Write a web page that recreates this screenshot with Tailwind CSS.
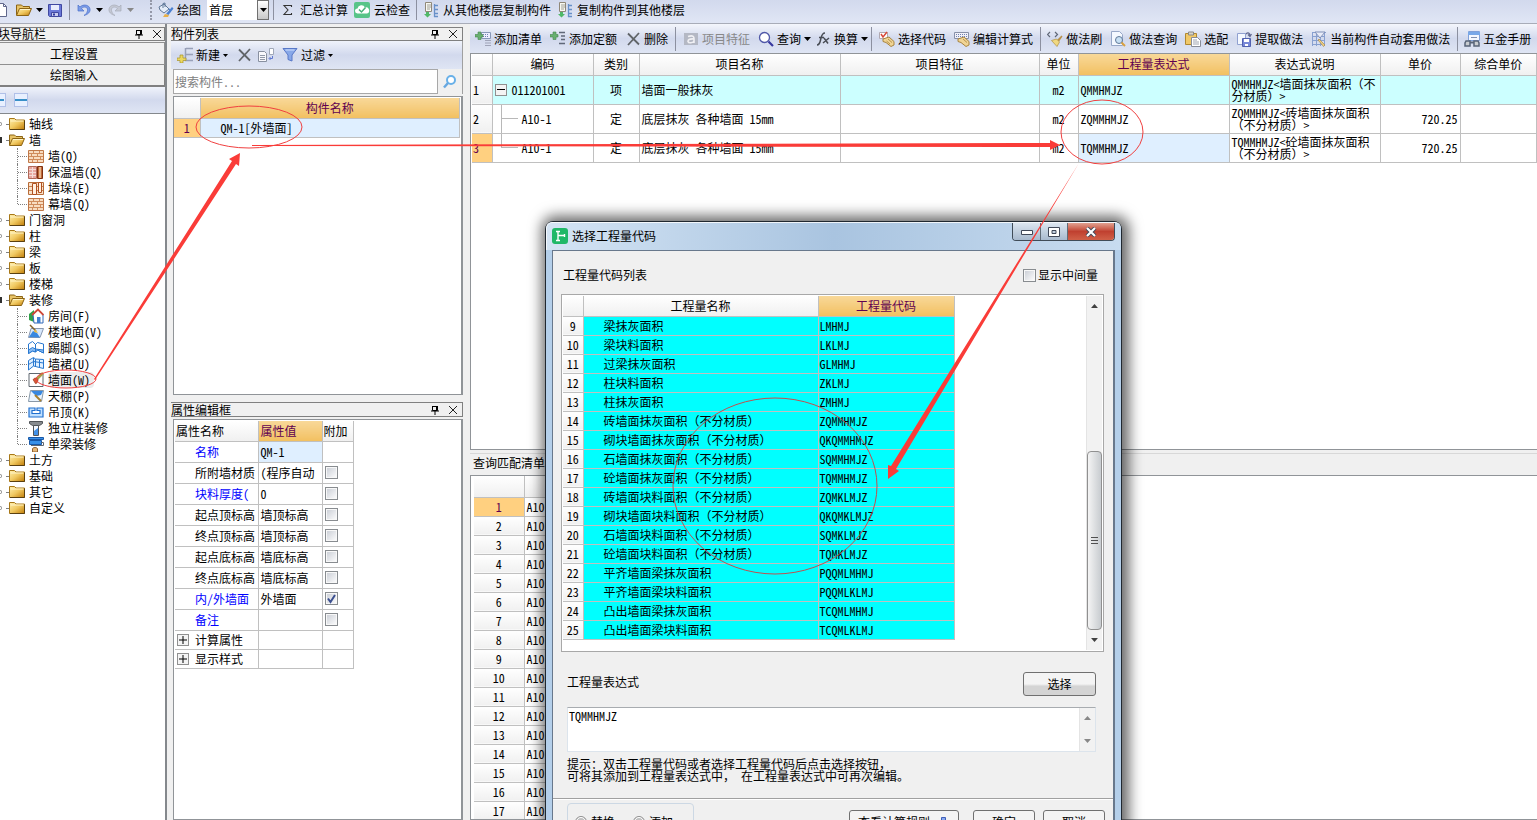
<!DOCTYPE html>
<html lang="zh-CN">
<head>
<meta charset="utf-8">
<title>选择工程量代码</title>
<script src="https://cdn.jsdelivr.net/npm/@tailwindcss/browser@4"></script>
</head>
<body class="relative h-screen overflow-hidden bg-[#f0f0f0] font-['Noto_Sans_Mono_CJK_SC','Noto_Sans_CJK_SC',monospace] text-xs leading-4 text-black">

<svg class="absolute h-0 w-0" aria-hidden="true">
  <defs>
    <linearGradient id="gold" x1="0" y1="0" x2="1" y2="1"><stop offset="0" stop-color="#fff0b0"/><stop offset=".5" stop-color="#f0c860"/><stop offset="1" stop-color="#c07c08"/></linearGradient>
  </defs>
  <symbol id="i-folder" viewBox="0 0 16 16"><path d="M.5 4V2.500h5L7 4h8.500v9.500H.5z" fill="url(#gold)" stroke="#a87818"/><path d="M15.500 4.500v9H1" fill="none" stroke="#5a4010"/><path d="M1.500 5h13" stroke="#fff4c8"/></symbol>
  <symbol id="i-open" viewBox="0 0 16 16"><path d="M.5 13V3h5L7 4.500h6.500V7" fill="#e8c468" stroke="#8c6414"/><path d="M.5 13.500L3.500 6.500h12L12.500 13.500z" fill="url(#gold)" stroke="#8c6414"/><path d="M4 7.500h10" stroke="#fff4c8"/></symbol>
  <symbol id="i-save" viewBox="0 0 16 16"><path d="M1.500 2.500h13v12h-12l-1-1z" fill="#6a78d8" stroke="#4048a0"/><path d="M4 3h8v5H4z" fill="#e8ecfc"/><path d="M4.500 10.500h7v4h-7z" fill="#c8ccf0" stroke="#4048a0"/><path d="M6 11.500h2v2H6z" fill="#3038a0"/></symbol>
  <symbol id="i-new" viewBox="0 0 16 16"><path d="M4.500 1.500h7l3 3v10h-10z" fill="#fff" stroke="#60688c"/><path d="M11.500 1.500v3h3" fill="none" stroke="#60688c"/></symbol>
  <symbol id="i-undo" viewBox="0 0 16 16"><path d="M2 3v6h6L5.500 6.500C8 4 12 5 11.500 8.500 11.200 11 9.500 12.500 8 13.500 12 12.500 14.500 10 14 7 13.500 3 7.500 1.500 4 5z" fill="#7a9ce8" stroke="#4c70c8" stroke-width=".7"/></symbol>
  <symbol id="i-redo" viewBox="0 0 16 16"><path d="M14 3v6H8l2.500-2.500C8 4 4 5 4.500 8.500 4.800 11 6.500 12.500 8 13.500 4 12.500 1.500 10 2 7 2.500 3 8.500 1.500 12 5z" fill="#c4c8d4" stroke="#a8acb8" stroke-width=".7"/></symbol>
  <symbol id="i-draw" viewBox="0 0 16 16"><path d="M1 5l5-3 5 5-5 4-4-3z" fill="#e4ecf8" stroke="#607898"/><path d="M5 6V1.500l2-.5v4" fill="none" stroke="#607898"/><path d="M8 12l6-7 1.500 1.500L10.500 13z" fill="#4a80d0"/><path d="M5 15l2-3 4 1-1 2z" fill="#e8b048"/><path d="M11 6.500l1.500 3" stroke="#4a80d0"/></symbol>
  <symbol id="i-cloud" viewBox="0 0 16 16"><rect width="16" height="16" rx="2" fill="#58c488"/><path d="M3.500 11.500a2.500 2.500 0 010-5 4 4 0 017.500-1 3 3 0 012 6z" fill="#fff"/><path d="M5 7.500l2.500 2.500 4-4.500" fill="none" stroke="#48b078" stroke-width="1.500"/></symbol>
  <symbol id="i-copy" viewBox="0 0 16 16"><path d="M2.500.5h6v9h-6z" fill="#f8f8f0" stroke="#908878"/><path d="M4 3h4M4 5h4M4 7h3" stroke="#a0a098"/><path d="M11.500 2v13M11 3.500h4M11 7.500h4M11 11.500h4M11 14.500h4" stroke="#6890c8" stroke-width="1.300"/><path d="M3 10h3v2h2l-3.500 3.500L1 12h2z" fill="#50b868"/></symbol>
  <symbol id="i-rows" viewBox="0 0 16 16"><path d="M9 1.500h7M9 7.500h7M8 13.500h8M8.500 1v13" stroke="#98a0b8" stroke-width="1.500"/><path d="M3 8h3v3h3v2.500H6V16H3v-2.500H0V11h3z" fill="#ecd860" stroke="#a89428" stroke-width=".7"/></symbol>
  <symbol id="i-addlist" viewBox="0 0 16 16"><path d="M6.500 1.500h9v6h-9z" fill="#eef" stroke="#8898b8"/><path d="M8 3.500h6M8 5.500h6" stroke="#7080b0" stroke-dasharray="1 1"/><path d="M10 9.500h6M10 12h6M10 14.500h6" stroke="#a0a4b8"/><path d="M3 1h3v2.500h2v2.500H6v2.500H3V6H0V3.500h3z" fill="#68b070" stroke="#488850" stroke-width=".6"/></symbol>
  <symbol id="i-addquota" viewBox="0 0 16 16"><path d="M9 1.500h6M11 5h4M11 8.500h4M9 12.500h6" stroke="#606878" stroke-width="1.300"/><path d="M3 1h3v2.500h2v2.500H6v2.500H3V6H0V3.500h3z" fill="#68b070" stroke="#488850" stroke-width=".6"/></symbol>
  <symbol id="i-x" viewBox="0 0 16 16"><path d="M3 2.500l11 11M14 2L3 14" stroke="#606468" stroke-width="1.800"/></symbol>
  <symbol id="i-a" viewBox="0 0 16 16"><path d="M1 2h14v12H1z" fill="#b4b8c4"/><path d="M5 5.500c5-1.500 6 0 6 2V12M11 8C6 7.500 5 9 5 10.500c.5 2 5 1.500 6-.5" fill="none" stroke="#f0f0f4" stroke-width="1.600"/></symbol>
  <symbol id="i-find" viewBox="0 0 16 16"><circle cx="6.500" cy="6.500" r="5" fill="#fff" stroke="#5058a8" stroke-width="1.300"/><path d="M10.500 10.500L15 15" stroke="#3838a0" stroke-width="2.200"/></symbol>
  <symbol id="i-find2" viewBox="0 0 16 16"><circle cx="9" cy="6" r="4" fill="#fff" stroke="#68b0e8" stroke-width="2"/><path d="M6 9L2 13.500" stroke="#68a8e0" stroke-width="2.500"/></symbol>
  <symbol id="i-fx" viewBox="0 0 16 16"><path d="M2 14c3 0 3-3 4-7s2-5 4-5M4 6.500h5M8 12l6-5M9 7l4 5.500" fill="none" stroke="#484c54" stroke-width="1.500"/></symbol>
  <symbol id="i-hand" viewBox="0 0 16 16"><path d="M.5 1.500h8v6h-8z" fill="#fff" stroke="#b0a8b0"/><path d="M2 3l2 3 4-5" fill="none" stroke="#d84838" stroke-width="1.500"/><path d="M4 8l6-2 5 4.500V14l-3 1.500-5-4-3-1z" fill="#f0d494" stroke="#a88440"/><path d="M9 8l4 3.500M7.500 10l3.500 3" stroke="#b89450"/></symbol>
  <symbol id="i-keyhand" viewBox="0 0 16 16"><path d="M.5 1.500h14v6H.5z" fill="#f0f0f8" stroke="#8890a8"/><path d="M2 3.500h11M2 5.500h11" stroke="#7080b0" stroke-dasharray="1 1"/><path d="M4 8l6-2 5 4.500V14l-3 1.500-5-4-3-1z" fill="#f0d494" stroke="#a88440"/><path d="M9 8l4 3.500" stroke="#b89450"/></symbol>
  <symbol id="i-brush" viewBox="0 0 16 16"><path d="M3 1L.5 3.500 3 6M8 1l2.500 2.500L8 6" fill="none" stroke="#606878" stroke-width="1.200"/><path d="M10 9l4.500-4.500 1 1L12 10.500z" fill="#b89048"/><path d="M4.500 9.500l5-1.500 3 3-2.500 4.500z" fill="#f0d880" stroke="#b09040" stroke-width=".7"/></symbol>
  <symbol id="i-docfind" viewBox="0 0 16 16"><path d="M1.500.5h8l3 3v11h-11z" fill="#f4f8ff" stroke="#98a8c8"/><circle cx="9" cy="9" r="3.500" fill="#c8e0f4" stroke="#607898"/><path d="M11.500 11.500l3.500 3.500" stroke="#d8a040" stroke-width="2"/></symbol>
  <symbol id="i-paste" viewBox="0 0 16 16"><path d="M.5 2.500h11v11H.5z" fill="#f0c868" stroke="#b08830"/><path d="M3.500 1h5v3h-5z" fill="#d8d4c8" stroke="#888"/><path d="M6.500 6.500h6l3 3v6h-9z" fill="#fff" stroke="#888c98"/><path d="M8 9h4M8 11h6M8 13h6" stroke="#a0a4b0"/></symbol>
  <symbol id="i-extract" viewBox="0 0 16 16"><path d="M1.500 2.500h8v11h-8z" fill="#f4f8ff" stroke="#90a0d0"/><path d="M6.500 7.500h8v8h-8z" fill="#7888d8" stroke="#5060b0"/><path d="M8 8h5v3H8zM9 13h3v2H9z" fill="#fff"/><path d="M10 3c2-2 4-1 4 2M12 3.500l2 2 1.500-2.500" fill="none" stroke="#606890" stroke-width="1.200"/></symbol>
  <symbol id="i-auto" viewBox="0 0 16 16"><path d="M1 1.500h14M1 5.500h12M1 9.500h12M1 13.500h12M1.500 1v14M5.500 1v14M9.500 1v14M13.500 1v14" stroke="#88a0d0"/><path d="M4 1l5 6 5-6z" fill="#e8ecf8" stroke="#8090b8"/><path d="M8 8l6 6-1.500 1.500L7 9z" fill="#f0d080" stroke="#a08040" stroke-width=".6"/></symbol>
  <symbol id="i-metal" viewBox="0 0 16 16"><path d="M4.500.5h11v9h-11z" fill="#f4f8ff" stroke="#80a0d8"/><path d="M4 1h12v3H4z" fill="#78a8e8"/><path d="M7 6.500h6" stroke="#8090b0"/><path d="M2 10h4v5H1v-3zM10 10h4l1 2v3h-5z" fill="#c8ccd0" stroke="#586478" stroke-width="1.500"/><path d="M6 11.500h4" stroke="#586478" stroke-width="2"/></symbol>
  <symbol id="i-copydoc" viewBox="0 0 16 16"><path d="M.5 4.500h6l2 2v8h-8z" fill="#f8f8fc" stroke="#8890a0"/><path d="M2 8.500h5M2 10.500h5M2 12.500h5" stroke="#9098a8"/><path d="M11.500 1.500h4v6h-4z" fill="#fff" stroke="#a0a8b8"/><path d="M14.500 9v2.500h-3M12.500 10L11 11.500l1.500 1.500" fill="none" stroke="#6078d0"/></symbol>
  <symbol id="i-filter" viewBox="0 0 16 16"><path d="M1 1.500h14L10 8v6l-4-1.500V8z" fill="#88a8e8" stroke="#5878c8"/><path d="M3.500 3h9" stroke="#d0e0ff"/></symbol>
  <symbol id="i-wall" viewBox="0 0 16 16"><path d="M.5 2.500h15v12H.5z" fill="#f8dcc0" stroke="#c07848"/><path d="M1 5.500h14M1 8.500h14M1 11.500h14M5.500 3v2.500M11.500 3v2.500M3.500 6v2.500M9.500 6v2.500M5.500 9v2.500M12.500 9v2.500M4.500 12v2M9.500 12v2" stroke="#d08c5c"/></symbol>
  <symbol id="i-wall2" viewBox="0 0 16 16"><path d="M.5 2.500h8v12h-8z" fill="#e8a8a0" stroke="#b06858"/><path d="M1 5.500h7M1 8.500h7M1 11.500h7M4.500 3v11" stroke="#f4dcd8"/><path d="M9.500 2.500h5v12h-5z" fill="#c06838" stroke="#803010"/><path d="M12 3v11" stroke="#f4d0a8" stroke-width="1.500"/></symbol>
  <symbol id="i-pier" viewBox="0 0 16 16"><path d="M.5 2.500h15v12H.5z" fill="#f8e0c8" stroke="#b86c38"/><path d="M1 6.500h14M1 10.500h14" stroke="#c88050"/><path d="M4.500 3.500h4v11h-4zM10.500 2.500h3v10h-3z" fill="#fff0e0" stroke="#b05020"/></symbol>
  <symbol id="i-room" viewBox="0 0 16 16"><path d="M1 6l5-4v12l-5-2z" fill="#30a048"/><path d="M5 6.500L10 2l5 4.500V15H6z" fill="#fff" stroke="#3068b8"/><path d="M4 7l6-5.500L15.500 7" fill="none" stroke="#d04838" stroke-width="1.800"/><path d="M9 9h3.500v6H9z" fill="#4080d0"/></symbol>
  <symbol id="i-floor" viewBox="0 0 16 16"><path d="M3 4.500h12.500L12 13.500H.5z" fill="#d8e8fc" stroke="#8898b0"/><path d="M1 13l4-6 4 2 3 4.500z" fill="#3888e0"/><path d="M2 1l6 6" stroke="#806028" stroke-width="1.500"/><path d="M7 5l3 4-4-1z" fill="#e8b840"/></symbol>
  <symbol id="i-skirt" viewBox="0 0 16 16"><path d="M.5 4l4-2.500 3 3 2-2 6 1.500v9l-6-3-2 2-3-1-4 2.500z" fill="#fff" stroke="#2878d0"/><path d="M.5 10l4-2.500 3 1.500 8 1V13l-6-3-2 2-3-1-4 2.500z" fill="#88bcf4" stroke="#2878d0"/><path d="M7.500 4v8" stroke="#2878d0"/></symbol>
  <symbol id="i-dado" viewBox="0 0 16 16"><path d="M.5 4.500l5-3 2 1.500 8 .500v9l-8-2-2-.500-5 4z" fill="#e0f0ff" stroke="#2878d0"/><path d="M.5 8.500l5-3 10 1.500M5.500 2v8M7.500 3v8M11.500 4v7" fill="none" stroke="#2878d0"/></symbol>
  <symbol id="i-face" viewBox="0 0 16 16"><path d="M1 1.500h14v13H1z" fill="#fff" stroke="#606870"/><path d="M9 7l6-6" stroke="#a8a048" stroke-width="2.500"/><path d="M5 8c1-3 5-2 5 0s-2 5-3 3-1-2-2-3z" fill="#d85838" stroke="#903018" stroke-width=".6"/></symbol>
  <symbol id="i-ceil" viewBox="0 0 16 16"><path d="M2.500 2.500h13l-2 11H.5z" fill="#eaf4ff" stroke="#8898a8"/><path d="M3 3h12l-2 4-5 1z" fill="#3888e0"/><path d="M7 7l6 6" stroke="#a88030" stroke-width="2"/></symbol>
  <symbol id="i-hang" viewBox="0 0 16 16"><path d="M1 4h6v2.500H4v3h8v-3H9V4h6v9H1z" fill="#c0e0ff" stroke="#2070d0" stroke-width="1.200"/></symbol>
  <symbol id="i-col" viewBox="0 0 16 16"><path d="M1.500 1.500h13v2l-3 2h-7l-3-2z" fill="#888c90" stroke="#505458"/><path d="M5.500 5.500h5v10h-5z" fill="#f4f8ff" stroke="#505458"/><path d="M6 15v-4l4-3v7z" fill="#4090e8"/></symbol>
  <symbol id="i-beam" viewBox="0 0 16 16"><path d="M.5 1.500h15v2H.5zM1.500 4.500h12v4h-12z" fill="#3890e8" stroke="#1858a8"/><path d="M13 6.500h2.500v3H3" fill="none" stroke="#606870"/><path d="M4.500 16v-3c0-2 5-2 5 0v3z" fill="#e8b878" stroke="#906030"/></symbol>
  <symbol id="i-pin" viewBox="0 0 10 10"><path d="M2.500 1v4.500h5V1M6.500 1v4.500" fill="none" stroke="#000"/><path d="M2 1.500h6M1 6h8M5 6v4" stroke="#000" stroke-width="1"/></symbol>
  <symbol id="i-close" viewBox="0 0 10 10"><path d="M1 1l8 8M9 1L1 9" stroke="#222"/></symbol>
  <symbol id="i-app" viewBox="0 0 16 16"><rect width="16" height="16" rx="3" fill="#20b868"/><path d="M4 3.500h4M6 3.500v9M4 12.500h4M6 7.500h7M12.500 6v3" stroke="#fff" stroke-width="1.400"/></symbol>
  <symbol id="i-caret" viewBox="0 0 7 4"><path d="M0 0h7L3.500 4z" fill="currentColor"/></symbol>
</svg>

<div class="flex h-full flex-col">
  <!-- Main toolbar -->
  <header class="flex h-6 shrink-0 items-center border-b border-[#a8acb8] bg-linear-to-b from-[#d2d9ed] to-[#e0e6f5] pb-1 whitespace-nowrap">
    <button class="-ml-2 mr-2" aria-label="新建"><svg class="size-4"><use href="#i-new"/></svg></button>
    <button class="flex items-center gap-1" aria-label="打开"><svg class="size-4"><use href="#i-open"/></svg><svg class="h-1 w-[7px]"><use href="#i-caret"/></svg></button>
    <button class="ml-1" aria-label="保存"><svg class="size-4"><use href="#i-save"/></svg></button>
    <i class="mx-1.5 h-5 w-px bg-[#8c90a0]"></i>
    <button class="flex items-center gap-1" aria-label="撤销"><svg class="size-4"><use href="#i-undo"/></svg><svg class="h-1 w-[7px]"><use href="#i-caret"/></svg></button>
    <button class="ml-1 flex items-center gap-1 text-[#888]" aria-label="恢复"><svg class="size-4"><use href="#i-redo"/></svg><svg class="h-1 w-[7px]"><use href="#i-caret"/></svg></button>
    <i class="ml-4 mr-1.5 h-5 border-l-2 border-dotted border-[#9498a8]"></i>
    <button class="flex items-center gap-[3px]"><svg class="size-4"><use href="#i-draw"/></svg>绘图</button>
    <label class="sr-only" for="floor">楼层</label>
    <span class="ml-1.5 grid h-5 w-[62px] items-center">
      <select id="floor" class="col-start-1 row-start-1 h-5 w-full appearance-none bg-white pl-0.5"><option>首层</option></select>
      <span class="pointer-events-none col-start-1 row-start-1 flex h-5 w-3 items-center justify-center justify-self-end border border-[#707070] bg-linear-to-b from-white to-[#c8c8c8]"><svg class="h-1 w-[7px]"><use href="#i-caret"/></svg></span>
    </span>
    <i class="mx-1 h-5 w-px bg-[#8c90a0]"></i>
    <button class="ml-1 flex items-center gap-1.5"><svg class="h-3 w-3" viewBox="0 0 12 12"><path d="M9.500 3V1.500H2l4 4.500-4 4.500h7.500V9" fill="none" stroke="#333" stroke-width="1.100"/></svg>汇总计算</button>
    <button class="ml-1.5 flex items-center gap-1"><svg class="size-4"><use href="#i-cloud"/></svg>云检查</button>
    <i class="mx-1.5 h-5 w-px bg-[#8c90a0]"></i>
    <button class="flex items-center gap-1"><svg class="size-4"><use href="#i-copy"/></svg>从其他楼层复制构件</button>
    <button class="ml-1.5 flex items-center gap-1"><svg class="size-4"><use href="#i-copy"/></svg>复制构件到其他楼层</button>
  </header>

  <div class="flex min-h-0 flex-1">
    <!-- Navigation -->
    <nav class="flex w-[167px] shrink-0 flex-col border-r-2 border-[#84888c] pt-[3px]">
      <h2 class="flex h-3.5 items-center border-y border-r border-[#808080]"><span class="-ml-0.5 flex-1">块导航栏</span><svg class="mr-2 size-[10px]"><use href="#i-pin"/></svg><svg class="mr-0.5 size-[10px]"><use href="#i-close"/></svg></h2>
      <button class="mt-px h-[23px] border border-[#909090] border-l-0 bg-[#f0f0f0] pr-4">工程设置</button>
      <button class="h-[22px] border-r border-b-2 border-[#808080] bg-[#f0f0f0] pr-4">绘图输入</button>
      <div class="flex h-[27px] items-center gap-2 border-b border-[#84888c] bg-linear-to-b from-[#f0f3fb] via-[#d2d9ed] to-[#dfe5f4]">
        <button class="flex h-3.5 w-1.5 items-center border border-l-0 border-[#b0c0e8] bg-[#e8f0ff]" aria-label="展开"><i class="block h-0.5 w-1 bg-[#3890c8]"></i></button>
        <button class="flex h-3.5 w-3.5 items-center justify-center border border-[#b0c0e8] bg-[#e8f0ff]" aria-label="收起"><i class="block h-0.5 w-3 bg-[#3890c8]"></i></button>
      </div>
      <ul id="tree" class="flex-1 overflow-hidden bg-white pt-0.5 whitespace-nowrap"></ul>
    </nav>

    <!-- Component list and property editor -->
    <section class="ml-1 flex w-[292px] shrink-0 flex-col pt-[3px]">
      <h2 class="flex h-3.5 items-center border border-l-0 border-[#808080]"><span class="flex-1">构件列表</span><svg class="mr-2 size-[10px]"><use href="#i-pin"/></svg><svg class="mr-1 size-[10px]"><use href="#i-close"/></svg></h2>
      <div class="flex h-[28px] items-center border-r border-[#a0a0a0] bg-linear-to-b from-[#f0f3fb] via-[#d2d9ed] to-[#dfe5f4] pl-1.5">
        <button class="flex items-center gap-[3px]"><svg class="size-4"><use href="#i-rows"/></svg>新建<svg class="h-[3px] w-[5px]"><use href="#i-caret"/></svg></button>
        <button class="ml-2" aria-label="删除"><svg class="size-4"><use href="#i-x"/></svg></button>
        <button class="ml-1.5" aria-label="复制"><svg class="size-4"><use href="#i-copydoc"/></svg></button>
        <button class="ml-2 flex items-center gap-[3px]"><svg class="size-4"><use href="#i-filter"/></svg>过滤<svg class="h-[3px] w-[5px]"><use href="#i-caret"/></svg></button>
      </div>
      <div class="flex h-[25px] border-r border-[#a0a0a0] pl-0.5">
        <input type="text" aria-label="搜索构件" placeholder="搜索构件..." class="min-w-0 flex-1 border border-[#a8a8a8] bg-white pl-px placeholder:text-[#808080]">
        <button class="flex w-6 items-center justify-center" aria-label="搜索"><svg class="size-4"><use href="#i-find2"/></svg></button>
      </div>
      <div class="ml-0.5 mt-0.5 h-[299px] border border-r-2 border-[#909498] bg-white pt-px pr-px">
        <table class="w-full table-fixed border-collapse">
          <colgroup><col class="w-[26px]"><col></colgroup>
          <thead><tr class="h-5"><th class="border-r border-b border-[#c0c0c0] bg-linear-to-b from-white to-[#f0f0f0]"></th><th class="border-r border-b border-[#c0c0c0] bg-linear-to-b from-[#f8d898] to-[#f2c060] p-0 font-normal text-[#600050]">构件名称</th></tr></thead>
          <tbody><tr class="h-[19px]"><td class="border-r border-b border-[#c0c0c0] bg-[#ffd080] p-0 text-center text-[#600050]">1</td><td class="border-r border-b border-[#c0c0c0] bg-[#dfefff] p-0 pl-5">QM-1[外墙面]</td></tr></tbody>
        </table>
      </div>
      <h2 class="mt-[7px] flex h-[15px] items-center border border-l-0 border-[#808080]"><span class="flex-1">属性编辑框</span><svg class="mr-2 size-[10px]"><use href="#i-pin"/></svg><svg class="mr-1 size-[10px]"><use href="#i-close"/></svg></h2>
      <div class="ml-0.5 mt-0.5 flex-1 overflow-hidden border border-r-2 border-[#909498] bg-white p-px">
        <table class="w-[178px] table-fixed border-collapse whitespace-nowrap">
          <colgroup><col class="w-[83px]"><col class="w-[64px]"><col class="w-[31px]"></colgroup>
          <thead><tr class="h-5 bg-linear-to-b from-white to-[#f0f0f0] text-left"><th class="border-r border-b border-[#c0c0c0] p-0 pl-px font-normal">属性名称</th><th class="border-r border-b border-[#c0c0c0] bg-linear-to-b from-[#f8d898] to-[#f2c060] p-0 pl-0.5 font-normal text-[#600050]">属性值</th><th class="border-r border-b border-[#c0c0c0] p-0 pl-px font-normal">附加</th></tr></thead>
          <tbody id="props"></tbody>
        </table>
      </div>
    </section>

    <!-- Work area -->
    <main class="ml-[7px] flex min-w-0 flex-1 flex-col">
      <div class="flex h-[29px] shrink-0 items-center gap-2 overflow-hidden bg-linear-to-b from-[#f4f6fc] via-[#d2d9ed] to-[#dfe5f4] pl-[5px] whitespace-nowrap">
        <button class="flex items-center gap-[3px]"><svg class="size-4"><use href="#i-addlist"/></svg>添加清单</button>
        <button class="flex items-center gap-[3px]"><svg class="size-4"><use href="#i-addquota"/></svg>添加定额</button>
        <button class="flex items-center gap-[3px]"><svg class="size-4"><use href="#i-x"/></svg>删除</button>
        <i class="-mx-px h-6 w-px bg-[#8c90a0]"></i>
        <button class="flex items-center gap-[3px] text-[#888]" disabled><svg class="size-4"><use href="#i-a"/></svg>项目特征</button>
        <button class="-mr-1 flex items-center gap-[3px]"><svg class="size-4"><use href="#i-find"/></svg>查询<svg class="h-1 w-[7px]"><use href="#i-caret"/></svg></button>
        <button class="-mr-1 flex items-center gap-[3px]"><svg class="size-4"><use href="#i-fx"/></svg>换算<svg class="h-1 w-[7px]"><use href="#i-caret"/></svg></button>
        <i class="-mx-px h-6 w-px bg-[#8c90a0]"></i>
        <button class="flex items-center gap-[3px]"><svg class="size-4"><use href="#i-hand"/></svg>选择代码</button>
        <button class="flex items-center gap-[3px]"><svg class="size-4"><use href="#i-keyhand"/></svg>编辑计算式</button>
        <i class="-mx-px h-6 w-px bg-[#8c90a0]"></i>
        <button class="-ml-px flex items-center gap-[3px]"><svg class="size-4"><use href="#i-brush"/></svg>做法刷</button>
        <button class="flex items-center gap-[3px]"><svg class="size-4"><use href="#i-docfind"/></svg>做法查询</button>
        <button class="flex items-center gap-[3px]"><svg class="size-4"><use href="#i-paste"/></svg>选配</button>
        <button class="flex items-center gap-[3px]"><svg class="size-4"><use href="#i-extract"/></svg>提取做法</button>
        <button class="flex items-center gap-[3px]"><svg class="size-4"><use href="#i-auto"/></svg>当前构件自动套用做法</button>
        <i class="-mx-px h-6 w-px bg-[#8c90a0]"></i>
        <button class="-ml-px flex items-center gap-[3px]"><svg class="size-4"><use href="#i-metal"/></svg>五金手册</button>
      </div>
      <div class="h-[397px] shrink-0 border border-r-0 border-[#909498] bg-white pl-px">
        <table class="w-full table-fixed border-collapse whitespace-nowrap">
          <colgroup><col class="w-5"><col class="w-[101px]"><col class="w-[46px]"><col class="w-[201px]"><col class="w-[199px]"><col class="w-[39px]"><col class="w-[151px]"><col class="w-[151px]"><col class="w-[80px]"><col></colgroup>
          <thead><tr id="mainhead" class="h-[21px] bg-linear-to-b from-white to-[#f0f0f0]"></tr></thead>
          <tbody id="main"></tbody>
        </table>
      </div>
      <h2 class="mt-[3px] flex h-[22px] shrink-0 items-center border-t border-[#d8d8d8] pb-1 pl-[3px]">查询匹配清单</h2>
      <div class="min-h-0 flex-1 overflow-hidden border border-r-0 border-[#909498] bg-white pl-[3px]">
        <table class="w-[560px] table-fixed border-collapse whitespace-nowrap">
          <colgroup><col class="w-[50px]"><col></colgroup>
          <thead><tr class="h-[21px] bg-linear-to-b from-white to-[#f0f0f0]"><th class="border-r border-b border-[#c0c0c0]"></th><th class="border-b border-[#c0c0c0]"></th></tr></thead>
          <tbody id="match"></tbody>
        </table>
      </div>
    </main>
  </div>
</div>

<!-- Quantity code window -->
<section role="dialog" aria-labelledby="dlg" class="absolute top-[221px] bottom-[-40px] left-[545px] flex w-[577px] flex-col rounded-t-lg border border-[#202830] bg-[#b4cfea] px-1.5 shadow-[2px_0_14px_5px_rgba(0,0,0,0.6)]">
  <div class="-mx-1.5 flex h-7 shrink-0 items-start rounded-t-md border-t border-l border-white/80 bg-linear-to-r from-[#d4e4f4] via-[#a9c4e0] to-[#c8dcf0] pl-[5px]">
    <svg class="mt-[5px] size-4"><use href="#i-app"/></svg>
    <h1 id="dlg" class="mt-[5px] ml-1 flex-1">选择工程量代码</h1>
    <div class="mr-1.5 flex h-[18px] overflow-hidden rounded-b border border-t-0 border-[#404c58]">
      <button class="flex w-7 items-center justify-center border-r border-[#606c78] bg-linear-to-b from-[#dce6f0] to-[#a8bace]" aria-label="最小化"><svg class="h-1.5 w-3" viewBox="0 0 12 6"><path d="M.5 1.500h11v4H.5z" fill="#fff" stroke="#404858"/></svg></button>
      <button class="flex w-[27px] items-center justify-center border-r border-[#606c78] bg-linear-to-b from-[#dce6f0] to-[#a8bace]" aria-label="最大化"><svg class="h-[10px] w-3" viewBox="0 0 12 10"><path d="M.5.5h11v9H.5zM4 3.500h4v3H4z" fill="#fff" stroke="#404858" fill-rule="evenodd"/></svg></button>
      <button class="flex w-[46px] items-center justify-center bg-linear-to-b from-[#e0a090] via-[#c04030] to-[#d06048]" aria-label="关闭"><svg class="h-[10px] w-3" viewBox="0 0 12 10"><path d="M2 1l8 8M10 1L2 9" stroke="#404858" stroke-width="4"/><path d="M2 1l8 8M10 1L2 9" stroke="#fff" stroke-width="2.200"/></svg></button>
    </div>
  </div>
  <div class="flex min-h-0 flex-1 flex-col border border-r-2 border-[#68788c] bg-[#f0f0f0] pr-[9px] pl-2">
    <div class="mt-[15px] flex h-[18px] items-center justify-between pl-0.5 pr-1.5">
      <span>工程量代码列表</span>
      <label class="flex items-center gap-0.5"><input type="checkbox" class="size-[13px] appearance-none border border-[#888c90] bg-linear-to-br from-[#c8ccd4] to-white outline outline-[#f8f8f8] -outline-offset-2">显示中间量</label>
    </div>
    <div class="mt-[10px] flex h-[358px] shrink-0 border border-[#a8a8a8] bg-white p-px">
      <div class="flex-1">
        <table class="w-[391px] table-fixed border-collapse whitespace-nowrap">
          <colgroup><col class="w-5"><col class="w-[235px]"><col class="w-[136px]"></colgroup>
          <thead><tr class="h-5 bg-linear-to-b from-white to-[#f0f0f0]"><th class="border-r border-b border-[#c0c0c0]"></th><th class="border-r border-b border-[#c0c0c0] p-0 font-normal">工程量名称</th><th class="border-r border-b border-[#c0c0c0] bg-linear-to-b from-[#f8d898] to-[#f2c060] p-0 font-normal text-[#600050]">工程量代码</th></tr></thead>
          <tbody id="codes"></tbody>
        </table>
      </div>
      <div class="flex w-4 flex-col items-center border-l border-[#e4e4e4] bg-[#f2f2f2] py-2">
        <svg class="h-1 w-[7px] rotate-180 text-[#404040]"><use href="#i-caret"/></svg>
        <div class="mt-[143px] flex h-[181px] w-[15px] flex-col items-center justify-center gap-px rounded-sm border border-[#909090] bg-linear-to-r from-[#f4f4f4] to-[#c8ccd0]"><i class="h-px w-[7px] bg-[#505050]"></i><i class="mt-px h-px w-[7px] bg-[#505050]"></i><i class="mt-px h-px w-[7px] bg-[#505050]"></i></div>
        <svg class="mt-2 h-1 w-[7px] text-[#404040]"><use href="#i-caret"/></svg>
      </div>
    </div>
    <div class="mt-5 flex h-6 shrink-0 items-start justify-between pl-1.5 pr-2">
      <label for="expr" class="pt-0.5">工程量表达式</label>
      <button class="h-6 w-[73px] rounded-[3px] border border-[#707070] bg-linear-to-b from-[#f4f4f4] from-50% to-[#d4d4d4] to-60%">选择</button>
    </div>
    <div class="mt-[11px] mr-2 ml-1.5 flex h-[45px] shrink-0 border border-t-[#a8acb0] border-[#dce4ec] bg-white">
      <textarea id="expr" class="min-w-0 flex-1 resize-none overflow-hidden pl-px leading-4 outline-none">TQMMHMJZ</textarea>
      <div class="flex w-4 flex-col items-center justify-between border-l border-[#e4e4e4] bg-[#f2f2f2] py-2 text-[#888]"><svg class="h-1 w-[7px] rotate-180"><use href="#i-caret"/></svg><svg class="h-1 w-[7px]"><use href="#i-caret"/></svg></div>
    </div>
    <p class="mt-[6px] pl-1.5 leading-3 whitespace-nowrap">提示：双击工程量代码或者选择工程量代码后点击选择按钮，<br>可将其添加到工程量表达式中， 在工程量表达式中可再次编辑。</p>
    <div class="-mr-[9px] -ml-2 mt-4 flex items-start border-t border-[#a0a0a0] pt-1 pr-2 pl-[14px] whitespace-nowrap shadow-[inset_0_1px_white]">
      <fieldset class="flex h-10 w-[127px] items-start gap-[18px] rounded-sm border border-[#ccd8e4] pt-2.5 pl-[7px]">
        <label class="flex items-center gap-1"><input type="radio" name="mode" class="size-3 appearance-none rounded-full border border-[#909090] bg-[#c0c0c0] outline outline-white -outline-offset-2">替换</label>
        <label class="flex items-center gap-1"><input type="radio" name="mode" class="size-3 appearance-none rounded-full border border-[#909090] bg-[#c0c0c0] outline outline-white -outline-offset-2">添加</label>
      </fieldset>
      <div class="mt-[7px] ml-auto flex">
        <button class="flex h-6 w-[110px] items-center gap-2 rounded-[3px] border border-[#707070] bg-linear-to-b from-[#f4f4f4] from-50% to-[#d4d4d4] to-60% pl-2">查看计算规则<svg class="h-3 w-2.5" viewBox="0 0 10 12"><path d="M3.500 1.500h4v5h2L5.500 11 1.500 6.500h2z" fill="#88a8f0" stroke="#4060b8"/></svg></button>
        <button class="ml-3.5 h-6 w-[62px] rounded-[3px] border border-[#707070] bg-linear-to-b from-[#f4f4f4] from-50% to-[#d4d4d4] to-60%">确定</button>
        <button class="ml-2 h-6 w-[62px] rounded-[3px] border border-[#707070] bg-linear-to-b from-[#f4f4f4] from-50% to-[#d4d4d4] to-60%">取消</button>
      </div>
    </div>
  </div>
</section>

<!-- Red annotation marks -->
<svg class="pointer-events-none absolute inset-0 h-full w-full" aria-hidden="true">
  <g fill="none" stroke="#f04040" stroke-width="1">
    <ellipse cx="249" cy="127" rx="53" ry="21"/>
    <ellipse cx="66" cy="379" rx="30" ry="9"/>
    <ellipse cx="1102" cy="132" rx="41" ry="32"/>
    <ellipse cx="775" cy="486" rx="102" ry="88" stroke="#c05050"/>
  </g>
  <g fill="#fa3c38">
    <path d="M94 379L232 161l-3-2 11-6-1 13-3-2L95 380z"/>
    <path d="M252 145L1050 143v-3l10 5-10 5v-3L252 146z"/>
    <path d="M1079 163L891 466l-3-1v14l11-8-3-2z"/>
  </g>
</svg>

<script>
const $ = id => document.getElementById(id);
const icon = n => `<svg class="size-4 shrink-0"><use href="#i-${n}"/></svg>`;

const tree = [
  ['轴线'], ['墙', [['wall','墙(Q)'],['wall2','保温墙(Q)'],['pier','墙垛(E)'],['wall','幕墙(Q)']]],
  ['门窗洞'], ['柱'], ['梁'], ['板'], ['楼梯'],
  ['装修', [['room','房间(F)'],['floor','楼地面(V)'],['skirt','踢脚(S)'],['dado','墙裙(U)'],['face','墙面(W)'],['ceil','天棚(P)'],['hang','吊顶(K)'],['col','独立柱装修'],['beam','单梁装修']]],
  ['土方'], ['基础'], ['其它'], ['自定义']
];
$('tree').innerHTML = tree.map(([name, kids]) => `<li>
  <div class="flex h-4 items-center"><i class="${kids ? 'h-1.5 w-0.5 bg-[#303030]' : 'h-1 w-0.5 rounded-r-full border border-l-0 border-[#909090]'}"></i><i class="mr-px ml-1 w-0.5 border-t border-dotted border-[#808080]"></i>${icon(kids ? 'open' : 'folder')}<span class="ml-1">${name}</span></div>
  ${kids ? `<ul>${kids.map(([ic, t], i) => `<li class="flex h-4 items-center pl-[17px]"><i class="${i === kids.length - 1 ? 'h-2 self-start' : 'h-4'} border-l border-dotted border-[#808080]"></i><i class="mr-px w-[9px] border-t border-dotted border-[#808080]"></i>${icon(ic)}<span class="ml-1 pr-1 ${ic === 'face' ? 'rounded-sm bg-[#ececec]' : ''}">${t}</span></li>`).join('')}</ul>` : ''}
</li>`).join('');

const props = [['名称','QM-1',1],['所附墙材质','(程序自动',0],['块料厚度(','0',1],['起点顶标高','墙顶标高',0],['终点顶标高','墙顶标高',0],['起点底标高','墙底标高',0],['终点底标高','墙底标高',0],['内/外墙面','外墙面',1],['备注','',1]];
const cell = 'border-r border-b border-[#c0c0c0] p-0';
$('props').innerHTML = props.map(([k, v, blue], i) => `<tr class="h-[21px]"><td class="${cell} pl-5 ${blue ? 'text-[#0000ff]' : ''}">${k}</td><td class="${cell} pl-0.5 ${i ? '' : 'bg-[#dfefff]'}">${v}</td><td class="${cell} pl-0.5">${i ? `<span class="grid w-[13px]"><input type="checkbox" aria-label="附加 ${k}" ${i === 7 ? 'checked' : ''} class="col-start-1 row-start-1 size-[13px] appearance-none border border-[#888c90] bg-linear-to-br from-[#c8ccd4] to-white outline outline-[#f8f8f8] -outline-offset-2">${i === 7 ? '<svg class="pointer-events-none col-start-1 row-start-1 size-[13px]" viewBox="0 0 13 13"><path d="M3 6.500L5.500 10 10 3" fill="none" stroke="#3c5090" stroke-width="2"/></svg>' : ''}</span>` : ''}</td></tr>`).join('')
 + ['计算属性','显示样式'].map(k => `<tr class="h-[19px]"><td class="${cell}"><span class="flex items-center gap-1.5 pl-0.5"><button aria-label="展开${k}" class="flex size-3 items-center justify-center border border-[#909090] bg-[#f4f4f4]"><svg class="size-[8px]" viewBox="0 0 8 8"><path d="M0 4h8M4 0v8" stroke="#000"/></svg></button>${k}</span></td><td class="${cell}"></td><td class="${cell}"></td></tr>`).join('');

$('mainhead').innerHTML = ['','编码','类别','项目名称','项目特征','单位','工程量表达式','表达式说明','单价','综合单价'].map((h, i) => `<th class="${cell} font-normal ${i === 6 ? 'bg-linear-to-b from-[#f8d898] to-[#f2c060] text-[#600050]' : ''}">${h}</th>`).join('');
const main = [
  ['011201001','项','墙面一般抹灰','QMMHMJZ','QMMHMJZ&lt;墙面抹灰面积（不<br>分材质）&gt;',''],
  ['A10-1','定','底层抹灰 各种墙面 15mm','ZQMMHMJZ','ZQMMHMJZ&lt;砖墙面抹灰面积<br>（不分材质）&gt;','720.25'],
  ['A10-1','定','底层抹灰 各种墙面 15mm','TQMMHMJZ','TQMMHMJZ&lt;砼墙面抹灰面积<br>（不分材质）&gt;','720.25']
];
$('main').innerHTML = main.map(([code, kind, name, ex, note, price], i) => `<tr class="h-[29px] ${i ? '' : 'bg-[#ccffff]'}">
  <td class="${cell} pl-px ${i === 2 ? 'bg-[#ffd080] text-[#600050]' : 'bg-linear-to-b from-white to-[#f0f0f0]'}">${i + 1}</td>
  <td class="${cell}"><span class="flex h-7 items-center">${i ? `<i class="ml-2 ${i === 2 ? 'h-3.5 self-start' : 'h-7'} border-l border-[#b8b8b8]"></i><i class="mr-1 w-4 border-t border-[#b8b8b8]"></i>` : '<button aria-label="折叠" class="mr-[5px] ml-0.5 flex size-3 items-center justify-center border border-[#909090] bg-[#f4f4f4]"><i class="h-px w-2 bg-black"></i></button>'}${code}</span></td>
  <td class="${cell} text-center">${kind}</td><td class="${cell} pl-0.5">${name}</td><td class="${cell}"></td><td class="${cell} text-center">m2</td>
  <td class="${cell} pl-0.5 ${i === 2 ? 'bg-[#dfefff]' : ''}">${ex}</td><td class="${cell} pl-0.5 leading-3">${note}</td><td class="${cell} pr-0.5 text-right">${price}</td><td class="${cell}"></td></tr>`).join('');

$('match').innerHTML = Array.from({length: 17}, (_, i) => `<tr class="h-[19px]"><td class="${cell} text-center ${i ? 'bg-linear-to-b from-white to-[#f0f0f0]' : 'bg-[#ffd080] text-[#600050]'}">${i + 1}</td><td class="${cell} pl-0.5">A10-${i + 1}</td></tr>`).join('');

const codes = [['梁抹灰面积','LMHMJ'],['梁块料面积','LKLMJ'],['过梁抹灰面积','GLMHMJ'],['柱块料面积','ZKLMJ'],['柱抹灰面积','ZMHMJ'],['砖墙面抹灰面积（不分材质）','ZQMMHMJZ'],['砌块墙面抹灰面积（不分材质）','QKQMMHMJZ'],['石墙面抹灰面积（不分材质）','SQMMHMJZ'],['砼墙面抹灰面积（不分材质）','TQMMHMJZ'],['砖墙面块料面积（不分材质）','ZQMKLMJZ'],['砌块墙面块料面积（不分材质）','QKQMKLMJZ'],['石墙面块料面积（不分材质）','SQMKLMJZ'],['砼墙面块料面积（不分材质）','TQMKLMJZ'],['平齐墙面梁抹灰面积','PQQMLMHMJ'],['平齐墙面梁块料面积','PQQMLKLMJ'],['凸出墙面梁抹灰面积','TCQMLMHMJ'],['凸出墙面梁块料面积','TCQMLKLMJ']];
$('codes').innerHTML = codes.map(([n, c], i) => `<tr class="h-[19px] bg-[#00ffff]"><td class="${cell} bg-linear-to-b from-white to-[#f0f0f0] text-center">${i + 9}</td><td class="${cell} pl-5">${n}</td><td class="${cell} pl-px">${c}</td></tr>`).join('');
</script>
</body>
</html>
